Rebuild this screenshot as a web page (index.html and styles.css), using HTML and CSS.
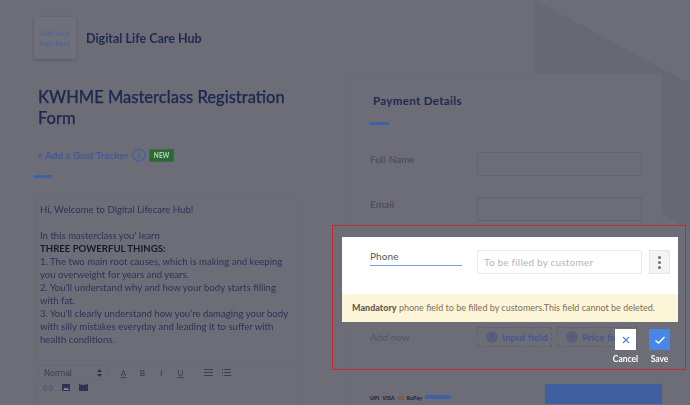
FILE: index.html
```html
<!DOCTYPE html>
<html lang="en">
<head>
<meta charset="utf-8">
<title>Registration Form</title>
<link rel="stylesheet" href="styles.css">
</head>
<body>
<div class="page">
  <svg class="decor" width="690" height="405" viewBox="0 0 690 405" aria-hidden="true">
    <polygon points="535,0 690,84 690,405 662,405 662,73 535,73" fill="#676871"/>
    <polygon points="662,214 690,230 690,405 662,405" fill="#6c6d77"/>
  </svg>
  <main class="columns">
    <section class="left">
      <header class="brand">
        <div class="logo">Add your<br>logo here</div>
        <div class="brand-name">Digital Life Care Hub</div>
      </header>
      <h1 class="title">KWHME Masterclass Registration Form</h1>
      <div class="tracker">
        <span class="tracker-link">+ Add a Goal Tracker</span>
        <svg width="14" height="14" viewBox="0 0 14 14"><circle cx="7" cy="7" r="6" fill="none" stroke="#3f5fa8" stroke-width="1.2"/><path d="M7 6v4.2M7 3.6v1.2" stroke="#3f5fa8" stroke-width="1.3"/></svg>
        <span class="new">NEW</span>
      </div>
      <div class="rule"></div>
      <div class="editor">
        <div class="editor-text">
          <p>Hi, Welcome to Digital Lifecare Hub!</p>
          <p class="gap">In this masterclass you' learn</p>
          <p><b>THREE POWERFUL THINGS:</b></p>
          <p>1. The two main root causes, which is making and keeping you overweight for years and years.</p>
          <p>2. You'll understand why and how your body starts filling with fat.</p>
          <p>3. You'll clearly understand how you're damaging your body with silly mistakes everyday and leading it to suffer with health conditions.</p>
        </div>
        <div class="toolbar">
          <div class="tool-row">
            <div class="select"><span>Normal</span>
              <svg width="5" height="8" viewBox="0 0 5 8"><path d="M2.5 0 5 3H0zM2.5 8 0 5h5z" fill="#2b2e45"/></svg>
            </div>
            <span class="tool tool-a">A</span>
            <span class="tool tool-b">B</span>
            <span class="tool tool-i">I</span>
            <span class="tool tool-u">U</span>
            <svg class="list-first" width="9" height="7" viewBox="0 0 9 7"><path d="M0 .5h9M0 3.5h9M0 6.5h9" stroke="#3b3e56"/></svg>
            <svg class="list-second" width="9" height="7" viewBox="0 0 9 7"><path d="M2 .5h7M2 3.5h7M2 6.5h7M0 .5h1M0 3.5h1M0 6.5h1" stroke="#3b3e56"/></svg>
          </div>
          <div class="tool-row icons">
            <svg width="10" height="6" viewBox="0 0 10 6"><path d="M4 .7H2.7a2.3 2.3 0 0 0 0 4.6H4M6 .7h1.3a2.3 2.3 0 0 1 0 4.6H6M3 3h4" fill="none" stroke="#4c4f66"/></svg>
            <svg width="8" height="7" viewBox="0 0 8 7"><path d="M0 0h8v7H0z" fill="#2f3252"/><path d="M1 6l2-2.4 1.4 1.4L5.600 3.600 7 6z" fill="#8a8c9c"/></svg>
            <svg width="9" height="7" viewBox="0 0 9 7"><path d="M0 0h1v1h1V0h1v1h3V0h1v1h1V0h1v7H0z" fill="#2f3252"/></svg>
          </div>
        </div>
      </div>
    </section>
    <section class="card">
      <h2 class="card-title">Payment Details</h2>
      <div class="card-rule"></div>
      <div class="field"><span class="field-label">Full Name</span><div class="field-box"></div></div>
      <div class="field"><span class="field-label">Email</span><div class="field-box"></div></div>
      <div class="add-row">
        <span class="add-label">Add new</span>
        <div class="pill"><span class="pill-icon">A</span>Input field</div>
        <div class="pill pill-price"><span class="pill-icon small">₹</span>Price field</div>
      </div>
      <div class="pay-row">
        <div class="badges"><span class="mark">UPI</span><span class="mark">VISA</span><span class="dot-red"></span><span class="mark">RuPay</span><span class="flag"></span></div>
        <div class="pay-btn"></div>
      </div>
    </section>
  </main>
  <div class="focus-frame"></div>
  <div class="modal">
    <div class="modal-main">
      <div class="phone-name">Phone</div>
      <div class="phone-input">To be filled by customer</div>
      <div class="more"><i></i><i></i><i></i></div>
    </div>
    <div class="notice"><b>Mandatory</b> phone field to be filled by customers.This field cannot be deleted.</div>
  </div>
  <div class="actions">
    <div class="action">
      <div class="action-btn cancel"><svg width="10" height="10" viewBox="0 0 10 10"><path d="M2 2l6 6M8 2l-6 6" stroke="#4a86e8" stroke-width="1.2"/></svg></div>
      <span>Cancel</span>
    </div>
    <div class="action">
      <div class="action-btn save"><svg width="12" height="10" viewBox="0 0 12 10"><path d="M1.500 5.500 4.500 8 10.500 2" fill="none" stroke="#fff" stroke-width="1.500"/></svg></div>
      <span>Save</span>
    </div>
  </div>
</div>
</body>
</html>
```

FILE: styles.css
```css
* { box-sizing: border-box; }
html, body { margin: 0; padding: 0; }
body { font-family: "Lato", "Open Sans", sans-serif; background: #6c6d77; }
.page { position: relative; width: 690px; height: 405px; overflow: hidden; background: #6c6d77; }
.decor { position: absolute; left: 0; top: 0; filter: blur(.5px); }
.columns { position: relative; display: flex; height: 405px; filter: blur(.3px); }

.left { width: 349px; padding: 17px 0 0 34px; flex: none; }
.brand { display: flex; align-items: center; gap: 10px; }
.logo { width: 42px; height: 42px; background: #6f707a; border-radius: 2px; box-shadow: 0 1px 3px rgba(50,50,60,.35); color: #4f6296; font-size: 7.500px; line-height: 9.500px; text-align: center; padding-top: 12px; }
.brand-name { color: #1f2a52; font-size: 12.500px; font-weight: 700; }
.title { margin: 28px 0 0 4px; width: 262px; color: #1e2950; font-size: 16.500px; line-height: 21px; font-weight: 500; -webkit-text-stroke: .25px #1e2950; }
.tracker { display: flex; align-items: center; margin: 19px 0 0 3px; height: 14px; }
.tracker-link { color: #3f5a9c; font-size: 10px; font-weight: 700; margin-right: 4px; }
.new { margin-left: 3px; background: #2a6a33; color: #b9c9bb; font-size: 6.500px; font-weight: 900; padding: 2px 3.500px; line-height: 7px; border: 1px solid #3b6a42; }
.rule { width: 18px; height: 3px; background: #3f62a6; margin-top: 13px; }
.editor { margin: 17px 0 0 1px; width: 263px; height: 240px; border: 1px solid #696a74; }
.editor-text { height: 164px; padding: 7px 4px 0; color: #2b3358; font-size: 9.600px; line-height: 13px; }
.editor-text p { margin: 0; }
.editor-text .gap { margin-top: 13px; }
.editor-text b { color: #171a2e; font-weight: 700; }
.toolbar { border-top: 1px solid #696a74; padding: 4px 2px; }
.tool-row { display: flex; align-items: center; height: 15px; }
.select { width: 70px; height: 15px; display: flex; align-items: center; justify-content: space-between; padding: 0 5px; color: #3b3e56; font-family: "Roboto", sans-serif; font-size: 8.500px; border: 1px solid #696a74; }
.tool { color: #3b3e56; font-size: 8px; font-weight: 700; width: 19px; text-align: center; }
.tool-a { margin-left: 6px; font-weight: 500; text-decoration: underline; }
.tool-i { font-style: italic; }
.tool-u { text-decoration: underline; font-weight: 500; }
.list-first { margin-left: 14px; }
.list-second { margin-left: 9px; }
.icons { gap: 9px; padding-left: 5px; }

.card { width: 313px; height: 345px; margin-top: 73px; padding: 19px 0 0 20px; background: #6c6d77; border: 1px solid #696a74; border-bottom: 0; position: relative; }
.card-title { margin: 0 0 0 3px; color: #1f2a52; font-size: 11.500px; line-height: 15px; font-weight: 700; letter-spacing: .35px; }
.card-rule { width: 19px; height: 3px; background: #3f62a6; margin-top: 14px; margin-bottom: 27px; }
.field { display: flex; align-items: flex-start; height: 45px; }
.field-label { width: 107px; color: #464955; font-size: 10px; line-height: 13px; padding-top: 1px; letter-spacing: .1px; }
.field-box { width: 165px; height: 24px; border: 1px solid #62636e; border-radius: 2px; }
.add-row { display: flex; align-items: center; margin-top: 85px; height: 20px; color: #545662; font-size: 10px; }
.add-label { width: 107px; letter-spacing: .1px; }
.pill { width: 75px; height: 20px; display: flex; align-items: center; gap: 4px; padding-left: 8px; border: 1px dashed #5f606c; color: #43598f; font-weight: 700; font-size: 10px; margin-right: 5px; white-space: nowrap; overflow: hidden; }
.pill-price { width: 80px; }
.pill-icon { width: 12px; height: 12px; border-radius: 50%; background: #5d6074; color: #43598f; text-align: center; font-size: 9px; line-height: 12px; flex: none; }
.pill-icon.small { font-size: 7px; }
.pay-row { display: flex; justify-content: space-between; margin-top: 37px; margin-right: -1px; align-items: flex-start; }
.badges { display: flex; align-items: center; gap: 3px; padding-top: 8px; height: 20px; }
.mark { color: #23273f; font-size: 5.500px; font-weight: 900; }
.dot-red { width: 6px; height: 4px; background: #7a5a48; }
.flag { width: 26px; height: 4px; background: #3f62a6; margin-top: -3px; }
.pay-btn { width: 117px; height: 20px; background: #3f5f9f; }

.focus-frame { position: absolute; left: 332px; top: 225px; width: 354px; height: 145px; border: 1px solid #c8282c; }
.modal { position: absolute; left: 342px; top: 237px; width: 336px; height: 85px; background: #fff; display: flex; flex-direction: column; }
.modal-main { flex: 1; display: flex; align-items: flex-start; padding: 13px 0 0 28px; }
.phone-name { width: 92px; height: 16px; border-bottom: 1px solid #6ea0ee; color: #55565c; font-size: 10px; line-height: 13px; letter-spacing: .1px; margin-right: 15px; }
.phone-input { width: 165px; height: 24px; border: 1px solid #e7e8ec; border-radius: 2px; color: #b4b5ba; font-size: 10px; line-height: 22px; padding-left: 6px; letter-spacing: .2px; }
.more { width: 21px; height: 24px; margin-left: 7px; background: #f3f3f3; border: 1px solid #e6e6e6; display: flex; flex-direction: column; align-items: center; justify-content: center; gap: 2px; }
.more i { width: 3px; height: 3px; border-radius: 50%; background: #6e6f76; }
.notice { height: 28px; background: #fdf5d8; color: #7c6f60; font-size: 9px; line-height: 27px; padding-left: 10px; white-space: nowrap; }
.notice b { color: #6a5a50; font-weight: 900; }
.actions { position: absolute; left: 609px; top: 329px; display: flex; gap: 3px; }
.action { width: 29px; display: flex; flex-direction: column; align-items: center; gap: 4px; color: #fff; font-size: 8.500px; font-weight: 700; line-height: 11px; }
.action-btn { width: 21px; height: 21px; display: flex; align-items: center; justify-content: center; }
.cancel { background: #fff; }
.save { background: #4a86e8; }
.action:first-child { width: 33px; }
```
